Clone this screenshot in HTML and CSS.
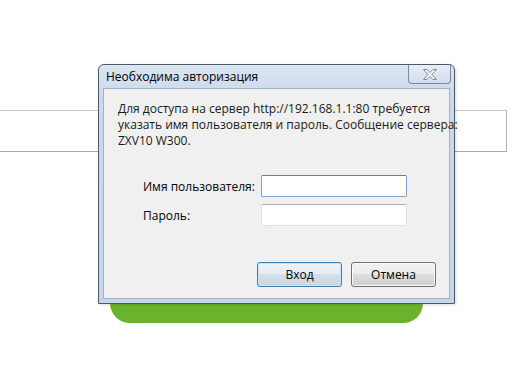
FILE: index.html
```html
<!DOCTYPE html>
<html lang="ru">
<head>
  <meta charset="UTF-8">
  <meta name="viewport" content="width=device-width, initial-scale=1.0">
  <title>Необходима авторизация</title>
  <link rel="stylesheet" href="styles.css">
</head>
<body>

<div class="page">
  <div class="banner"></div>
  <div class="green-tab"></div>
</div>

<div class="dialog">
  <div class="titlebar">
    <span class="title">Необходима авторизация</span>
    <button class="close-btn" type="button">
      <svg width="16" height="11" viewBox="0 0 16 11">
        <path d="M1.5 0.5 L5 0.5 L8 3.6 L11 0.5 L14.5 0.5 L9.9 5.5 L14.5 10.5 L11 10.5 L8 7.4 L5 10.5 L1.5 10.5 L6.1 5.5 Z" fill="#fbfcfd" stroke="#7d8795" stroke-width="1" stroke-linejoin="round"/>
      </svg>
    </button>
  </div>
  <div class="body">
    <p class="message">Для доступа на сервер http://192.168.1.1:80 требуется указать имя пользователя и пароль. Сообщение сервера: ZXV10 W300.</p>
    <form class="login-form">
      <div class="form-row">
        <label for="user" class="form-label">Имя пользователя:</label>
        <input type="text" id="user" class="form-input focused">
      </div>
      <div class="form-row">
        <label for="pass" class="form-label">Пароль:</label>
        <input type="password" id="pass" class="form-input">
      </div>
      <div class="buttons">
        <button type="submit" class="btn default">Вход</button>
        <button type="button" class="btn">Отмена</button>
      </div>
    </form>
  </div>
</div>

</body>
</html>
```

FILE: styles.css
```css
body {
  margin: 0;
  background-color: #fff;
  font-family: "Open Sans", "Noto Sans", sans-serif;
  font-size: 12px;
  color: #000;
}

.page {
  padding-top: 110px;
}

.banner {
  width: 506px;
  height: 40px;
  border-top: 1px solid #c4c4c4;
  border-bottom: 1px solid #a9a9a9;
  border-right: 1px solid #b5b5b5;
}

.green-tab {
  margin: 120px 0 0 110px;
  width: 313px;
  height: 51px;
  background-color: #6ab42c;
  border-radius: 0 0 20px 20px;
}

.dialog {
  position: absolute;
  left: 98px;
  top: 64px;
  width: 357px;
  height: 240px;
  box-sizing: border-box;
  border: 1px solid #4a5a6c;
  border-radius: 6px 6px 0 0;
  background: linear-gradient(#dbe6f3, #cbd9ea 30px, #c6d5e8);
  padding: 0 4px 4px 4px;
  display: flex;
  flex-direction: column;
  box-shadow: 1px 1px 3px rgba(0, 0, 0, 0.15);
}

.titlebar {
  height: 23px;
  display: flex;
  align-items: flex-start;
  justify-content: space-between;
}

.title {
  padding: 3px 0 0 3px;
  color: #000;
}

.close-btn {
  margin: 0 -1px 0 0;
  width: 43px;
  height: 19px;
  padding: 0;
  border: 1px solid #7c8a9c;
  border-top: none;
  border-radius: 0 0 4px 4px;
  background: linear-gradient(#e7eef7, #d1deed);
  display: flex;
  align-items: center;
  justify-content: center;
}

.body {
  flex: 1;
  background-color: #f0f0f0;
  border: 1px solid #9fb2c9;
  padding: 12px 0 0 14px;
}

.message {
  margin: 0;
  width: 345px;
  line-height: 16px;
  color: #1a1a1a;
}

.login-form {
  margin-top: 26px;
}

.form-row {
  display: flex;
  align-items: center;
  margin-bottom: 7px;
}

.form-label {
  margin-left: 25px;
  flex: 0 0 118px;
}

.form-input {
  width: 146px;
  height: 22px;
  box-sizing: border-box;
  border: 1px solid #dbdfe6;
  border-top-color: #abadb3;
  background-color: #fff;
  border-radius: 2px;
  padding: 0;
}

.form-input.focused {
  border-color: #7da2ce;
  border-top-color: #5b7fa6;
}

.buttons {
  display: flex;
  justify-content: flex-end;
  gap: 9px;
  margin-top: 36px;
  padding-right: 13px;
}

.btn {
  width: 85px;
  height: 25px;
  font-family: inherit;
  font-size: 12px;
  color: #000;
  border: 1px solid #707070;
  border-radius: 3px;
  background: linear-gradient(#f2f2f2, #ebebeb 50%, #dddddd 50%, #cfcfcf);
  box-shadow: inset 0 0 0 1px #fcfcfc;
  padding: 0;
}

.btn.default {
  border-color: #3c7fb1;
  box-shadow: inset 0 0 0 1px #c7e5f8;
  background: linear-gradient(#eef4f8, #e5edf3 50%, #d4dfe8 50%, #c9d7e2);
}
```
